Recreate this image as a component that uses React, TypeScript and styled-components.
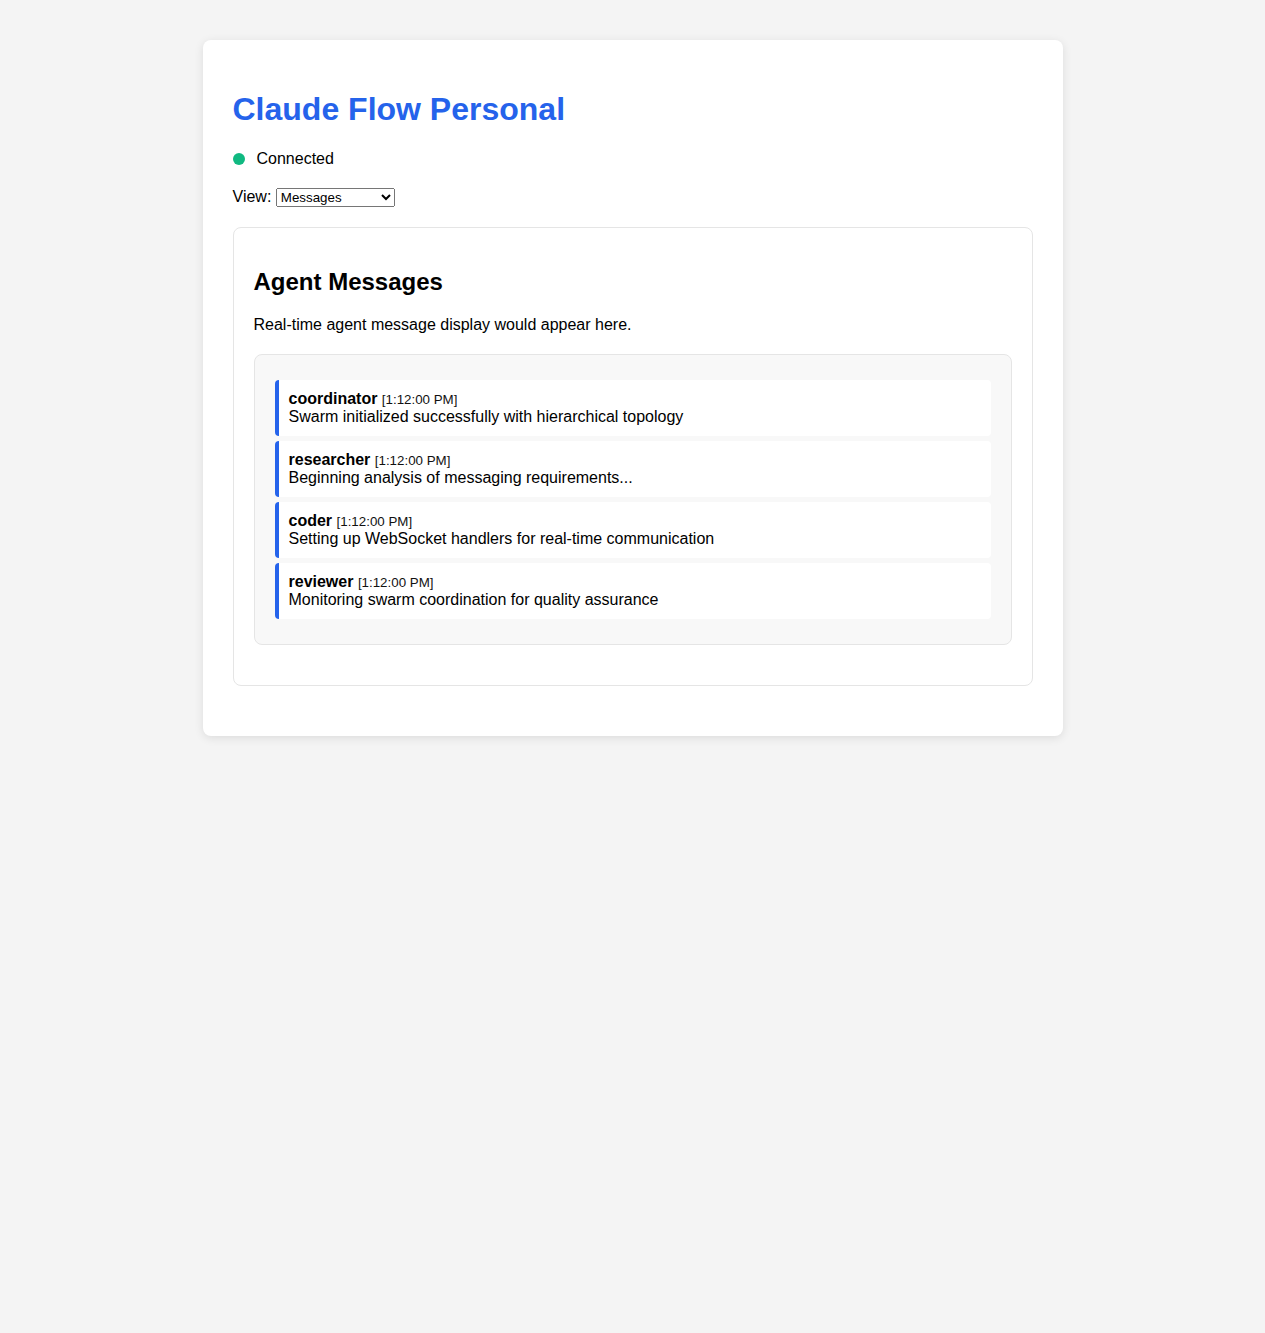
import React, { useState } from 'react';
import styled, { createGlobalStyle } from 'styled-components';

const GlobalStyle = createGlobalStyle`
  html, body {
    margin: 0;
    padding: 0;
    background: #f4f4f4;
    font-family: "Liberation Sans", Arial, sans-serif;
    color: #000;
  }
`;

const messages = [
  { agent: 'coordinator', time: '1:12:00 PM', text: 'Swarm initialized successfully with hierarchical topology' },
  { agent: 'researcher', time: '1:12:00 PM', text: 'Beginning analysis of messaging requirements...' },
  { agent: 'coder', time: '1:12:00 PM', text: 'Setting up WebSocket handlers for real-time communication' },
  { agent: 'reviewer', time: '1:12:00 PM', text: 'Monitoring swarm coordination for quality assurance' },
];

const App = () => {
  const [view, setView] = useState('messages');

  return (
    <>
      <GlobalStyle />
      <Container>
        <Title>Claude Flow Personal</Title>
        <Status>
          <Dot $connected />
          <span>Connected</span>
        </Status>
        <ViewRow>
          View:{' '}
          <Select value={view} onChange={(e) => setView(e.target.value)}>
            <option value="messages">Messages</option>
            <option value="monitor">Monitor</option>
            <option value="dashboard">Dashboard</option>
          </Select>
        </ViewRow>

        <Panel>
          <PanelTitle>Agent Messages</PanelTitle>
          <Description>Real-time agent message display would appear here.</Description>
          <MessageList>
            {messages.map((m) => (
              <Message key={m.agent}>
                <MessageHead>
                  <strong>{m.agent}</strong> <Time>[{m.time}]</Time>
                </MessageHead>
                <MessageText>{m.text}</MessageText>
              </Message>
            ))}
          </MessageList>
        </Panel>
      </Container>
    </>
  );
};

// Styled components
const Container = styled.div`
  box-sizing: border-box;
  max-width: 860px;
  margin: 40px auto;
  padding: 30px;
  background: #ffffff;
  border-radius: 8px;
  box-shadow: 0 2px 10px rgba(0, 0, 0, 0.1);
`;

const Title = styled.h1`
  margin: 21.44px 0;
  font-size: 32px;
  font-weight: bold;
  color: #2563eb;
`;

const Status = styled.div`
  display: flex;
  align-items: center;
  gap: 12px;
  font-size: 16px;
  margin-bottom: 20px;
`;

const Dot = styled.span<{ $connected?: boolean }>`
  width: 12px;
  height: 12px;
  border-radius: 50%;
  background: ${(p) => (p.$connected ? '#10b981' : '#ef4444')};
`;

const ViewRow = styled.div`
  font-size: 16px;
  margin-bottom: 20px;
`;

const Select = styled.select`
  width: 119px;
  font-family: "Liberation Sans", Arial, sans-serif;
  font-size: 13.33px;
`;

const Panel = styled.div`
  border: 1px solid #e5e5e5;
  border-radius: 8px;
  padding: 20px;
  margin-bottom: 20px;
`;

const PanelTitle = styled.h2`
  margin: 19.92px 0;
  font-size: 24px;
  font-weight: bold;
`;

const Description = styled.p`
  margin: 16px 0;
  font-size: 16px;
`;

const MessageList = styled.div`
  margin-top: 20px;
  margin-bottom: 20px;
  padding: 20px;
  background: #f8f8f8;
  border: 1px solid #e5e5e5;
  border-radius: 8px;
`;

const Message = styled.div`
  margin: 5px 0;
  padding: 10px;
  background: #ffffff;
  border-left: 4px solid #2563eb;
  border-radius: 4px;
  font-size: 16px;
`;

const MessageHead = styled.div`
  height: 18px;
  line-height: 18px;
  white-space: nowrap;
`;

const MessageText = styled.div`
  height: 18px;
  line-height: 18px;
`;

const Time = styled.span`
  font-size: 13.33px;
  color: #111;
`;

export default App;
